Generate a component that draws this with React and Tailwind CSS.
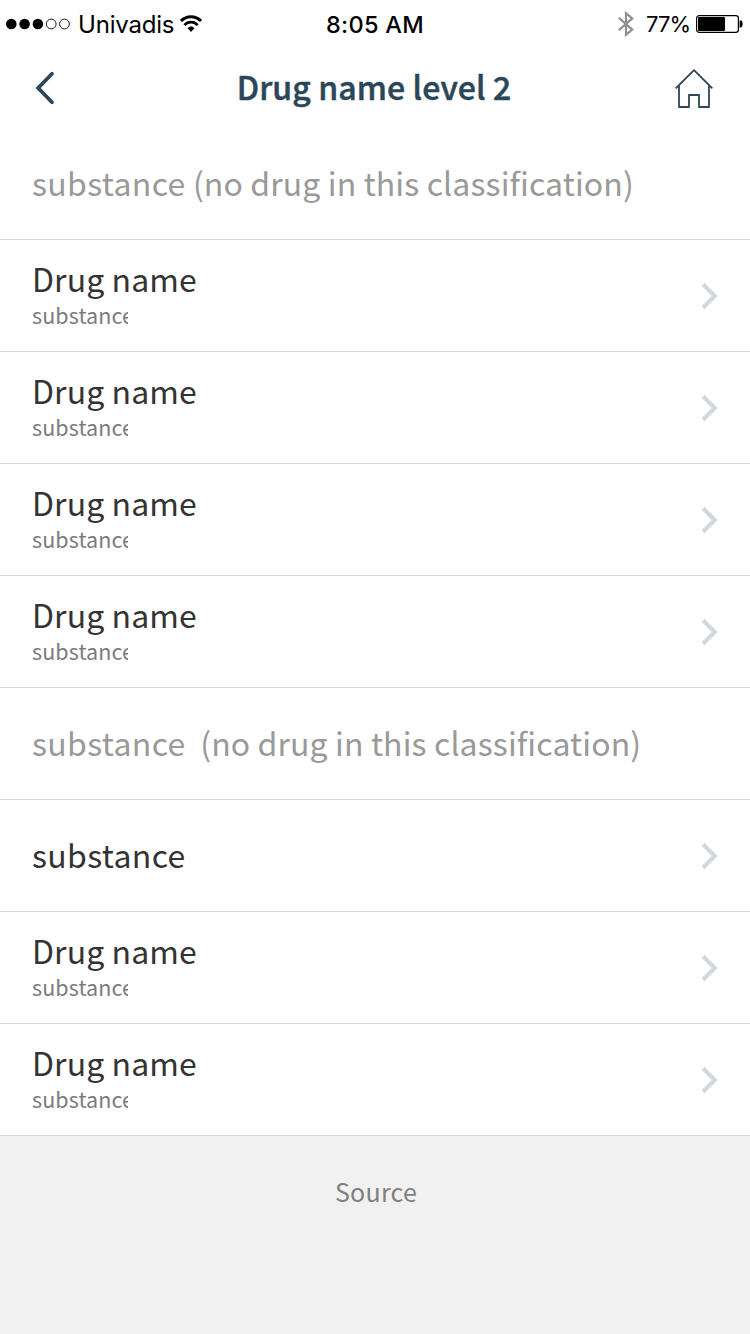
const rows = [
  { title: 'substance', note: ' (no drug in this classification)' },
  { title: 'Drug name', sub: 'substance' },
  { title: 'Drug name', sub: 'substance' },
  { title: 'Drug name', sub: 'substance' },
  { title: 'Drug name', sub: 'substance' },
  { title: 'substance', note: '  (no drug in this classification)' },
  { title: 'substance' },
  { title: 'Drug name', sub: 'substance' },
  { title: 'Drug name', sub: 'substance' },
];

function StatusBar() {
  return (
    <div className="flex h-12 items-center justify-between font-['Inter',sans-serif] text-black">
      <div className="flex w-[260px] items-center pl-[6px]">
        <svg width="66" height="12" viewBox="0 0 66 12">
          <circle cx="5.3" cy="6" r="5.3" />
          <circle cx="18.6" cy="6" r="5.3" />
          <circle cx="31.9" cy="6" r="5.3" />
          <circle cx="45.2" cy="6" r="4.9" fill="none" stroke="#000" strokeWidth="0.9" />
          <circle cx="58.5" cy="6" r="4.9" fill="none" stroke="#000" strokeWidth="0.9" />
        </svg>
        <span className="ml-[6px] w-[97px] whitespace-nowrap pt-[2px] text-[24px] leading-8 tracking-[-0.2px]">Univadis</span>
        <svg className="ml-[5px]" width="22" height="18" viewBox="0 0 22 18" fill="none" stroke="#000">
          <path d="M0.9 6C6.6 0.2 15.4 0.2 21.1 6" strokeWidth="3" />
          <path d="M4.4 10.1C8.1 6.2 13.9 6.2 17.6 10.1" strokeWidth="2.8" />
          <path d="M7.6 13.2C9.6 11 12.4 11 14.4 13.2L11 17Z" fill="#000" stroke="none" />
        </svg>
      </div>
      <span className="whitespace-nowrap pt-[2px] text-[23.5px] font-medium leading-8 tracking-[0.3px]">8:05 AM</span>
      <div className="flex w-[260px] items-center justify-end pr-[7px]">
        <svg width="16" height="26" viewBox="0 0 16 26" fill="none" stroke="#8e8e8e" strokeWidth="2.2">
          <path d="M0.8 6.7L14.2 18.6L8 23.8V2.2L14.2 7.4L0.8 19.3" />
        </svg>
        <span className="ml-[12px] w-[44px] whitespace-nowrap text-[22px] leading-8 tracking-[-0.9px]">77%</span>
        <svg className="ml-[6px]" width="47" height="18" viewBox="0 0 47 18">
          <rect x="0.6" y="0.6" width="41.8" height="16.8" rx="2.6" fill="none" stroke="#000" strokeWidth="1.2" />
          <rect x="2" y="2" width="27" height="14" rx="1" />
          <path d="M43.6 5.6H45.2Q46.6 6 46.6 9T45.2 12.4H43.6Z" />
        </svg>
      </div>
    </div>
  );
}

function Header() {
  return (
    <header className="flex h-20 items-center justify-between pl-[35px] pr-[37px] text-[#2b4757]">
      <svg width="38" height="34" viewBox="0 0 38 34" fill="none" stroke="currentColor" strokeWidth="3.8" strokeLinecap="round" strokeLinejoin="miter">
        <path d="M17 2.8L3.2 17L17 31.2" />
      </svg>
      <h1 className="whitespace-nowrap pb-1 text-[32px] font-medium leading-10 tracking-[0.1px] [-webkit-text-stroke:0.5px_#2b4757]">Drug name level 2</h1>
      <svg width="38" height="40" viewBox="0 0 38 40" fill="none" stroke="currentColor" strokeWidth="1.8" strokeLinejoin="round">
        <path d="M0.7 20.4L19 2.2L37.3 20.4" />
        <path d="M4 17.5V39H14V27H24V39H34V17.5" />
      </svg>
    </header>
  );
}

function Row({ title, note, sub }) {
  return (
    <li className="flex h-28 items-center justify-between border-b border-[#cfd8dd] pl-8 pr-8">
      <div className={sub ? 'flex flex-col pb-px' : 'flex flex-col pb-1'}>
        <span className={note ? 'whitespace-pre text-[32px] leading-10 text-[#999999]' : 'whitespace-pre text-[32px] leading-10 text-[#333333]'}>
          <span className={sub ? 'tracking-[0.1px]' : 'tracking-[0.34px]'}>{title}</span>
          {note && <span className="tracking-[0.12px]">{note}</span>}
        </span>
        {sub && <span className="w-24 overflow-hidden text-[21.5px] leading-[34px] tracking-[0.1px] text-[#7b7b7b]">{sub}</span>}
      </div>
      {!note && (
        <svg width="17" height="28" viewBox="0 0 17 28" fill="none" stroke="#cfd8dd" strokeWidth="4.2">
          <path d="M2 2.2L13.6 14L2 25.8" />
        </svg>
      )}
    </li>
  );
}

export default function App() {
  return (
    <div className="flex h-[1334px] w-[750px] flex-col overflow-hidden bg-[#f1f1f1] font-['Noto_Sans_CJK_SC',sans-serif]">
      <div className="bg-white">
        <StatusBar />
        <Header />
        <ul>
          {rows.map((row, i) => (
            <Row key={i} {...row} />
          ))}
        </ul>
      </div>
      <footer className="pl-[2px] pt-[35px] text-center text-[25px] leading-10 tracking-[0.25px] text-[#7f7f7f]">Source</footer>
    </div>
  );
}
